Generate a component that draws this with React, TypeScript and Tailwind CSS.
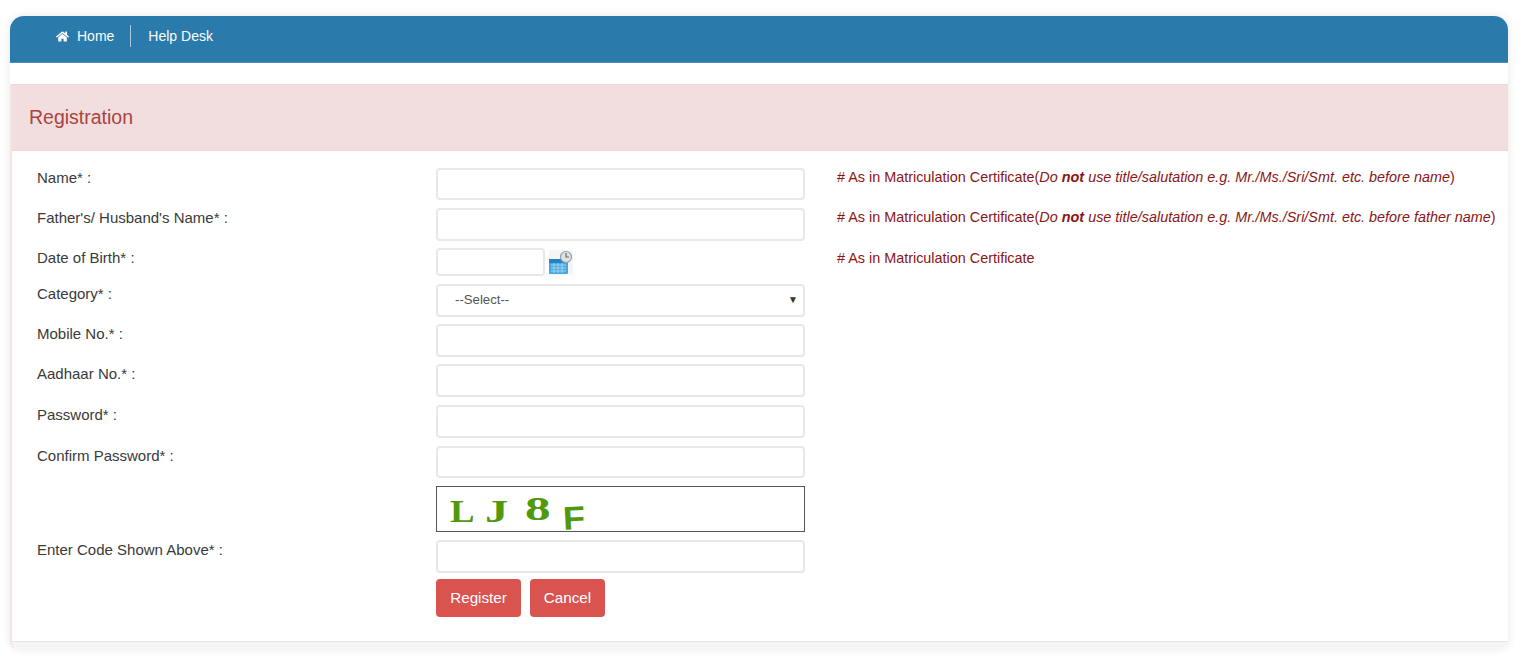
import { FaHome } from "react-icons/fa";

const inputClass =
  "block h-[32.5px] w-[369px] rounded-[4px] border-2 border-[#e8e8e8] bg-white";

function Hint({ tail, bold }: { tail?: string; bold?: boolean }) {
  return (
    <span className={"block whitespace-nowrap text-[14.4px] text-[#8a1515] " + (bold ? "-mt-[1px]" : "")}>
      # As in Matriculation Certificate
      {bold && (
        <>
          (<i>Do <b>not</b> use title/salutation e.g. Mr./Ms./Sri/Smt. etc. before {tail}</i>)
        </>
      )}
    </span>
  );
}

function Row({
  label,
  hint,
  children,
  className,
}: {
  label?: string;
  hint?: React.ReactNode;
  children: React.ReactNode;
  className?: string;
}) {
  return (
    <div className={"flex " + (className ?? "")}>
      <div className="w-[399px] shrink-0 text-[15px] text-[#3a3a3a]">{label}</div>
      <div className="w-[401px] shrink-0">{children}</div>
      <div>{hint}</div>
    </div>
  );
}

function CalendarIcon() {
  return (
    <svg viewBox="0 0 24 25" className="ml-1 mt-[2px] h-[25px] w-[24px]">
      <rect width="24" height="25" fill="#f3f5f6" />
      <rect x="0" y="9" width="19" height="15" rx="1" fill="#45a8df" />
      <rect x="0" y="9" width="19" height="4" fill="#2583c2" />
      <path d="M2 15h15M2 18h15M2 21h15M5 13v10M9 13v10M13 13v10" stroke="#9fd6f2" strokeWidth="1" />
      <circle cx="17" cy="7" r="5.5" fill="#dfe2e4" stroke="#9a9fa3" strokeWidth="1.2" />
      <path d="M17 3v4h3" fill="none" stroke="#666c70" strokeWidth="1.2" />
    </svg>
  );
}

export default function App() {
  return (
    <div className="h-[656px] overflow-hidden bg-white pb-[7px] pl-[10px] pr-[21px] pt-4 font-['Liberation_Sans',Arial,sans-serif] text-[14px] leading-[20px]">
      <div className="flex h-[633px] flex-col rounded-t-[14px] rounded-b-[10px] bg-white shadow-[0_0_10px_rgba(0,0,0,0.1)]">
        {/* Top nav */}
        <nav className="flex h-[47px] shrink-0 items-start rounded-t-[14px] border-b border-[#4a8db8] bg-[#2a7aab] pl-[46px] pt-[9px] text-[#fdfdfd]">
          <a className="flex h-[22px] items-center gap-[8px] border-r border-[#a9c9dd] pr-4">
            <FaHome className="h-[13px] w-[13px]" />
            Home
          </a>
          <a className="flex h-[22px] items-center pl-[17px]">Help Desk</a>
        </nav>

        <div className="h-[21px] shrink-0" />

        {/* Panel */}
        <div className="flex min-h-0 flex-1 flex-col rounded-b-[8px] border-l-2 border-[#f4e3e5] bg-white">
          <div className="flex h-[67px] shrink-0 items-center border-y border-[#efd5d8] bg-[#f2dede] pb-[1px] pl-[17px] text-[19.5px] text-[#a94442]">
            Registration
          </div>
          <div className="min-h-0 flex-1 pl-[25px] pt-[16.5px]">
            <Row label="Name* :" hint={<Hint bold tail="name" />}>
              <div className={inputClass} />
            </Row>
            <Row className="mt-[8px]" label="Father's/ Husband's Name* :" hint={<Hint bold tail="father name" />}>
              <div className={inputClass} />
            </Row>
            <Row className="mt-[7.5px]" label="Date of Birth* :" hint={<Hint />}>
              <div className="flex">
                <div className="h-[28px] w-[109px] rounded-[4px] border-2 border-[#e8e8e8] bg-white" />
                <CalendarIcon />
              </div>
            </Row>
            <Row className="mt-[8px]" label="Category* :">
              <div className={inputClass + " flex items-center justify-between pl-[17px] pr-[5px] text-[13.2px] text-[#555]"}>
                <span>--Select--</span>
                <span className="text-[10px] text-[#333]">▼</span>
              </div>
            </Row>
            <Row className="mt-[7.5px]" label="Mobile No.* :">
              <div className={inputClass} />
            </Row>
            <Row className="mt-[7.5px]" label="Aadhaar No.* :">
              <div className={inputClass} />
            </Row>
            <Row className="mt-[8.5px]" label="Password* :">
              <div className={inputClass} />
            </Row>
            <Row className="mt-[8px]" label="Confirm Password* :">
              <div className={inputClass} />
            </Row>
            <Row className="mt-[8px]">
              <div className="flex h-[46px] w-[369px] items-start border border-[#555] bg-white font-['Liberation_Serif',serif] font-bold text-[#4f9a0c]">
                <span className="ml-[13px] mt-[10px] w-[16px] origin-left scale-x-[1.15] text-[32px] leading-[28px]">L</span>
                <span className="ml-[19px] mt-[10px] w-[16px] origin-left scale-x-[1.45] text-[32px] leading-[28px]">J</span>
                <span className="ml-[24px] mt-[8px] w-[16px] origin-left scale-x-[1.55] text-[33px] leading-[28px]">8</span>
                <span className="ml-[22px] mt-[17px] w-[20px] origin-left -rotate-3 scale-x-[1.1] font-['Liberation_Sans',sans-serif] text-[33px] leading-[30px]">F</span>
              </div>
            </Row>
            <Row className="mt-[8px]" label="Enter Code Shown Above* :">
              <div className={inputClass} />
            </Row>
            <Row className="mt-[6.5px]">
              <div className="flex gap-[9px] text-[15.2px] text-white">
                <button className="h-[38px] w-[85px] rounded-[4px] bg-[#d9534f]">Register</button>
                <button className="h-[38px] w-[75px] rounded-[4px] bg-[#d9534f]">Cancel</button>
              </div>
            </Row>
          </div>
          <div className="h-[8px] shrink-0 rounded-b-[8px] border-t border-[#e6e6e6] bg-[#f5f5f5]" />
        </div>
      </div>
    </div>
  );
}
